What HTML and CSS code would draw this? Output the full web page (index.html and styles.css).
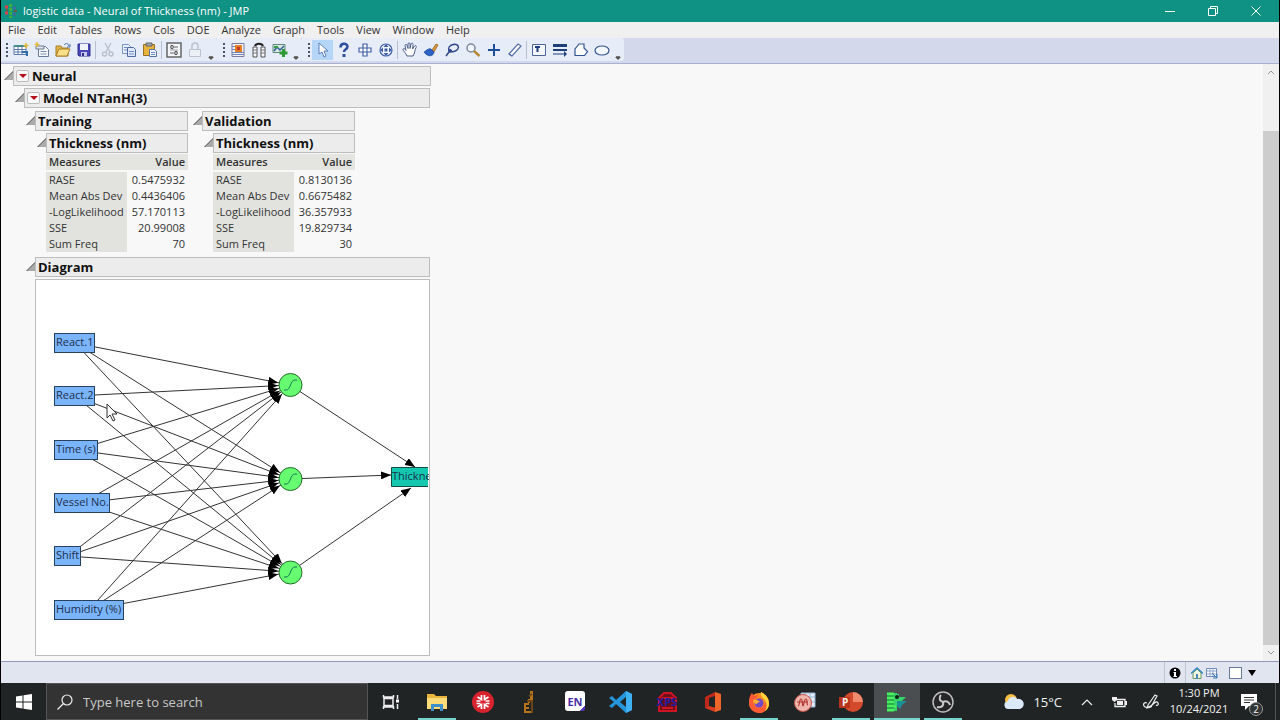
FILE: index.html
```html
<!DOCTYPE html>
<html lang="en">
<head>
  <meta charset="UTF-8" />
  <title>logistic data - Neural of Thickness (nm) - JMP</title>
  <meta name="viewport" content="width=device-width, initial-scale=1.0" />
  <link rel="stylesheet" href="styles.css">
</head>
<body>
  <div class="window">
    <header class="titlebar">
      <svg class="logo" width="14" height="14" viewBox="0 0 14 14">
        <path d="M1 3h3M1 9h3" stroke="#d8434e" stroke-width="3"/>
        <path d="M6.500 0v14" stroke="#3fae3c" stroke-width="3" stroke-dasharray="3 1"/>
        <path d="M9 4h3M9 10h3" stroke="#3d6f9c" stroke-width="3"/>
        <path d="M2 6h2M10 7h3" stroke="#6b5b3a" stroke-width="2"/>
      </svg>
      <span class="title">logistic data - Neural of Thickness (nm) - JMP</span>
      <div class="window-buttons">
        <button type="button" aria-label="Minimize"><svg width="10" height="10" viewBox="0 0 10 10"><path d="M0 5.500h10"/></svg></button>
        <button type="button" aria-label="Restore"><svg width="10" height="10" viewBox="0 0 10 10"><path d="M.5 2.500h7v7h-7zM2.500 2.500v-2h7v7h-2"/></svg></button>
        <button type="button" aria-label="Close"><svg width="10" height="10" viewBox="0 0 10 10"><path d="M.5.5l9 9M9.500.5l-9 9"/></svg></button>
      </div>
    </header>

    <nav class="menubar">
      <button type="button">File</button>
      <button type="button">Edit</button>
      <button type="button">Tables</button>
      <button type="button">Rows</button>
      <button type="button">Cols</button>
      <button type="button">DOE</button>
      <button type="button">Analyze</button>
      <button type="button">Graph</button>
      <button type="button">Tools</button>
      <button type="button">View</button>
      <button type="button">Window</button>
      <button type="button">Help</button>
    </nav>

    <div class="toolbar">
      <div class="tool-group">
        <span class="grip"></span>
        <button type="button" aria-label="New data table"><svg viewBox="0 0 16 16"><path d="M1 3.500h12v9H1z" fill="#fff" stroke="#5c7aa8"/><path d="M1 4h12" stroke="#3f8f86" stroke-width="2"/><path d="M1 7.500h12M1 10h12M5 4v8M9 4v8" stroke="#5c7aa8"/><path d="M13 1v5M10.500 3.500h5" stroke="#e2b93b" stroke-width="1.500"/><path d="M9 10h5v4" stroke="#2f6fae" stroke-width="2" fill="none"/></svg></button>
        <button type="button" aria-label="New script"><svg viewBox="0 0 16 16"><path d="M4.500 4.500h7l3 3v7h-10z" fill="#f6f8fd" stroke="#6b7a94"/><path d="M2 4h8v3H2z" fill="#dfe6f2" stroke="#6b7a94"/><path d="M6.500 9.500h6M6.500 12h6" stroke="#7d90b0"/><path d="M3 0v5M.5 2.500h5" stroke="#e2b93b" stroke-width="1.500"/></svg></button>
        <button type="button" aria-label="Open"><svg viewBox="0 0 16 16"><path d="M1 14V4h5l1 2h6v8z" fill="#e3b44a" stroke="#a87f25"/><path d="M1 14l3-7h11l-3 7z" fill="#fbe08b" stroke="#a87f25"/><path d="M9 3c2-2 4-2 5 1M15 2v3h-3" fill="none" stroke="#4a6ea8"/></svg></button>
        <button type="button" aria-label="Save"><svg viewBox="0 0 16 16"><path d="M2 2h12v12H3l-1-1z" fill="#4a48b8" stroke="#2f2d8c"/><path d="M4 2h8v6H4z" fill="#f1f3fb"/><path d="M5 10h6v4H5z" fill="#c8cbe8"/><path d="M6 11h2v3H6z" fill="#2f2d8c"/></svg></button>
        <span class="separator"></span>
        <button type="button" aria-label="Cut" disabled><svg viewBox="0 0 16 16"><path d="M5 1l5 9M11 1L6 10" stroke="#bcc2ce" stroke-width="1.500"/><circle cx="4.500" cy="12" r="2" fill="none" stroke="#bcc2ce" stroke-width="1.500"/><circle cx="11" cy="12" r="2" fill="none" stroke="#bcc2ce" stroke-width="1.500"/></svg></button>
        <button type="button" aria-label="Copy"><svg viewBox="0 0 16 16"><path d="M1.500 2.500h6l2 2v7h-8z" fill="#e8eefb" stroke="#7b93bf"/><path d="M6.500 5.500h6l2 2v7h-8z" fill="#dfe9fb" stroke="#4c6ba5"/><path d="M8 9.500h5M8 12h5M3 5.500h3M3 8h3" stroke="#6f8fc8"/></svg></button>
        <button type="button" aria-label="Paste"><svg viewBox="0 0 16 16"><path d="M1.500 2.500h11v11h-11z" fill="#e9b33f" stroke="#9a7124"/><path d="M4 1h6v3H4z" fill="#a0a5ae" stroke="#666"/><path d="M7.500 7.500h5l2 2v5h-7z" fill="#eef3fc" stroke="#5573a8"/><path d="M9 10.500h4M9 12.500h4" stroke="#6f8fc8"/></svg></button>
        <span class="separator"></span>
        <button type="button" aria-label="Preferences"><svg viewBox="0 0 16 16"><path d="M1 1h14v14H1z" fill="#f3f5f8" stroke="#666" stroke-width="1.500"/><path d="M4 5h8M4 11h8" stroke="#666"/><path d="M5 3.500h2v3H5zM9 9.500h2v3H9z" fill="#fff" stroke="#555"/><path d="M4 8h8" stroke="#999"/></svg></button>
        <button type="button" aria-label="Lock" disabled><svg viewBox="0 0 16 16"><path d="M2.500 7.500h11v7h-11z" fill="#eceff5" stroke="#bcc2ce"/><path d="M5 7V4a3 3 0 0 1 6 0v3" fill="none" stroke="#bcc2ce" stroke-width="1.500"/></svg></button>
        <button type="button" class="overflow" aria-label="More tools"></button>
      </div>
      <div class="tool-group">
        <span class="grip"></span>
        <button type="button" aria-label="Distribution"><svg viewBox="0 0 16 16"><path d="M2 1.500h12v13H2z" fill="#f5f2f6" stroke="#7c7a9e"/><path d="M5 3h7v7H5z" fill="#e67e22"/><path d="M2 4.500h3M2 7.500h3M2 10.500h12M2 12.500h12" stroke="#6f86bd"/><path d="M7 5h3v3H7z" fill="#c0392b"/></svg></button>
        <button type="button" aria-label="Fit Y by X"><svg viewBox="0 0 16 16"><path d="M2 5h4v10H2zM10 5h4v10h-4z" fill="#f5f7fa" stroke="#555"/><path d="M2 8h4M2 11h4M10 8h4M10 11h4" stroke="#777"/><path d="M4 4c1-3 7-3 8 0" fill="none" stroke="#222" stroke-width="2"/></svg></button>
        <button type="button" aria-label="Graph builder"><svg viewBox="0 0 16 16"><path d="M1 2.500h12v8H1z" fill="#d8e8e0" stroke="#5f8a7e"/><path d="M2 9l3-4 3 3 4-4" fill="none" stroke="#2f5f9c" stroke-width="1.500"/><path d="M2 4h4v2H2z" fill="#3a9d4a"/><path d="M11.500 7v8M7.500 11h8" stroke="#2e9b36" stroke-width="3"/></svg></button>
        <button type="button" class="overflow" aria-label="More analyses"></button>
      </div>
      <div class="tool-group">
        <span class="grip"></span>
        <button type="button" class="selected" aria-label="Arrow"><svg viewBox="0 0 16 16"><path d="M4 1v11l3-2 2 5 2-1-2-5h4z" fill="#fff" stroke="#5a7fb8"/></svg></button>
        <button type="button" aria-label="Help tool"><svg viewBox="0 0 16 16"><path d="M4.500 5.500c0-5 7-4.500 7-1 0 3-3.500 2.500-3.500 5.500" fill="none" stroke="#2d4f9c" stroke-width="2.500"/><path d="M6.500 12h3v3h-3z" fill="#2d4f9c"/></svg></button>
        <button type="button" aria-label="Selection"><svg viewBox="0 0 16 16"><path d="M6 2h4v4h4v4h-4v4H6v-4H2V6h4z" fill="#fff" stroke="#3f5fa5" stroke-width="1.200"/><path d="M6 6h4v4H6z" fill="none" stroke="#3f5fa5"/></svg></button>
        <button type="button" aria-label="Scroller"><svg viewBox="0 0 16 16"><circle cx="8" cy="8" r="6" fill="#f6f9ff" stroke="#3f5fa5" stroke-width="1.200"/><path d="M8 2l2.500 3h-5zM8 14l2.500-3h-5zM2 8l3-2.500v5zM14 8l-3-2.500v5zM6.500 6.500h3v3h-3z" fill="#3f5fa5"/></svg></button>
        <span class="separator"></span>
        <button type="button" aria-label="Grabber"><svg viewBox="0 0 16 16"><path d="M5 14C4 11 1 9 1 7.500s2-1 3 1L3 3.500c0-1.500 2-1.500 2 0l1 3V2c0-1.500 2-1.500 2 0v4.500L9 2c.5-1.500 2-1 2 .5L10.500 7l2-3c1-1 2.500 0 1.500 1.500-1.500 3-1 6-3 8.500z" fill="#fff" stroke="#4d5f8e"/></svg></button>
        <button type="button" aria-label="Brush"><svg viewBox="0 0 16 16"><path d="M9 8l4-6 2 1-4 7z" fill="#d9953b" stroke="#8a5b1c" stroke-width=".7"/><path d="M1 10c2-1 4-4 7-3l3 3c0 4-6 6-10 0z" fill="#2b62c4" stroke="#1e458e" stroke-width=".7"/></svg></button>
        <button type="button" aria-label="Lasso"><svg viewBox="0 0 16 16"><ellipse cx="9.500" cy="6" rx="5" ry="3.500" transform="rotate(-20 9.500 6)" fill="none" stroke="#2d4487" stroke-width="1.500"/><path d="M6 8c2 0 2 2 0 2s-1-3 1-2M5 10l-3 4" fill="none" stroke="#2d4487" stroke-width="1.500"/></svg></button>
        <button type="button" aria-label="Magnifier"><svg viewBox="0 0 16 16"><circle cx="6" cy="6" r="4" fill="#f3f8ff" stroke="#7b8799" stroke-width="1.500"/><path d="M9 9l5.500 5" stroke="#b9893a" stroke-width="2.500"/></svg></button>
        <button type="button" aria-label="Crosshairs"><svg viewBox="0 0 16 16"><path d="M8 2v12M2 8h12" stroke="#1f4e9c" stroke-width="2"/></svg></button>
        <button type="button" aria-label="Eraser"><svg viewBox="0 0 16 16"><path d="M2 12l9-10 3 2-9 10z" fill="#fff" stroke="#5870a8" stroke-width="1.200"/><path d="M5 14l-3-2" stroke="#5870a8" stroke-width="1.500"/></svg></button>
        <span class="separator"></span>
        <button type="button" aria-label="Annotate"><svg viewBox="0 0 16 16"><path d="M1.500 2.500h13v11h-13z" fill="#f3f7fd" stroke="#4d6596"/><path d="M4 5h5M6.500 5v5" stroke="#1f3f7c" stroke-width="2"/></svg></button>
        <button type="button" aria-label="Line"><svg viewBox="0 0 16 16"><path d="M1 3.500h14" stroke="#1f3f7c" stroke-width="3"/><path d="M1 8h14" stroke="#1f3f7c" stroke-width="2"/><path d="M1 12h12" stroke="#1f3f7c"/><path d="M12 9l3 3-3 3z" fill="#1f3f7c"/></svg></button>
        <button type="button" aria-label="Polygon"><svg viewBox="0 0 16 16"><path d="M2 13.500V7l4-5h5v4l3.500 3.500-3 4z" fill="#fafcff" stroke="#35538f" stroke-width="1.200"/></svg></button>
        <button type="button" aria-label="Oval"><svg viewBox="0 0 16 16"><ellipse cx="8" cy="8.500" rx="7" ry="4.500" fill="#f3f8ff" stroke="#35538f" stroke-width="1.200"/></svg></button>
        <button type="button" class="overflow" aria-label="More drawing tools"></button>
      </div>
    </div>

    <div class="workspace">
      <main class="report">
        <section class="outline">
          <div class="outline-head">
            <button type="button" class="disclosure" aria-label="Collapse Neural"></button>
            <div class="outline-title">
              <button type="button" class="red-menu" aria-label="Neural options"></button>
              <h1>Neural</h1>
            </div>
          </div>
          <div class="outline-body">
            <section class="outline model">
              <div class="outline-head">
                <button type="button" class="disclosure" aria-label="Collapse model"></button>
                <div class="outline-title">
                  <button type="button" class="red-menu" aria-label="Model options"></button>
                  <h2>Model NTanH(3)</h2>
                </div>
              </div>
              <div class="outline-body">
                <div class="fit-columns">
                  <section class="outline fit">
                    <div class="outline-head">
                      <button type="button" class="disclosure" aria-label="Collapse Training"></button>
                      <div class="outline-title"><h3>Training</h3></div>
                    </div>
                    <div class="outline-body">
                      <div class="outline-head">
                        <button type="button" class="disclosure" aria-label="Collapse Thickness"></button>
                        <div class="outline-title"><h4>Thickness (nm)</h4></div>
                      </div>
                      <table class="measures">
                        <thead>
                          <tr><th>Measures</th><th>Value</th></tr>
                        </thead>
                        <tbody>
                          <tr><td>RASE</td><td>0.5475932</td></tr>
                          <tr><td>Mean Abs Dev</td><td>0.4436406</td></tr>
                          <tr><td>-LogLikelihood</td><td>57.170113</td></tr>
                          <tr><td>SSE</td><td>20.99008</td></tr>
                          <tr><td>Sum Freq</td><td>70</td></tr>
                        </tbody>
                      </table>
                    </div>
                  </section>
                  <section class="outline fit">
                    <div class="outline-head">
                      <button type="button" class="disclosure" aria-label="Collapse Validation"></button>
                      <div class="outline-title"><h3>Validation</h3></div>
                    </div>
                    <div class="outline-body">
                      <div class="outline-head">
                        <button type="button" class="disclosure" aria-label="Collapse Thickness"></button>
                        <div class="outline-title"><h4>Thickness (nm)</h4></div>
                      </div>
                      <table class="measures">
                        <thead>
                          <tr><th>Measures</th><th>Value</th></tr>
                        </thead>
                        <tbody>
                          <tr><td>RASE</td><td>0.8130136</td></tr>
                          <tr><td>Mean Abs Dev</td><td>0.6675482</td></tr>
                          <tr><td>-LogLikelihood</td><td>36.357933</td></tr>
                          <tr><td>SSE</td><td>19.829734</td></tr>
                          <tr><td>Sum Freq</td><td>30</td></tr>
                        </tbody>
                      </table>
                    </div>
                  </section>
                </div>

                <section class="outline">
                  <div class="outline-head">
                    <button type="button" class="disclosure" aria-label="Collapse Diagram"></button>
                    <div class="outline-title"><h3>Diagram</h3></div>
                  </div>
                  <div class="diagram">
                    <svg width="393" height="375" viewBox="0 0 393 375">
                      <defs>
                        <!-- tip stops 12 units short of the end, at the edge of a hidden node -->
                        <marker id="arrow" markerUnits="userSpaceOnUse" markerWidth="10" markerHeight="8" refX="22" refY="4" orient="auto">
                          <path d="M0 0L10 4L0 8z"/>
                        </marker>
                        <marker id="arrow-end" markerUnits="userSpaceOnUse" markerWidth="10" markerHeight="8" refX="10" refY="4" orient="auto">
                          <path d="M0 0L10 4L0 8z"/>
                        </marker>
                      </defs>
                      <g class="links">
                        <path d="M39 63L254 105"/><path d="M39 63L254 199"/><path d="M39 63L254 292"/>
                        <path d="M39 116L254 105"/><path d="M39 116L254 199"/><path d="M39 116L254 292"/>
                        <path d="M40 170L254 105"/><path d="M40 170L254 199"/><path d="M40 170L254 292"/>
                        <path d="M46 223L254 105"/><path d="M46 223L254 199"/><path d="M46 223L254 292"/>
                        <path d="M32 276L254 105"/><path d="M32 276L254 199"/><path d="M32 276L254 292"/>
                        <path d="M53 330L254 105"/><path d="M53 330L254 199"/><path d="M53 330L254 292"/>
                      </g>
                      <g class="links-out">
                        <path d="M254 105L379 187"/><path d="M254 199L355 195"/><path d="M254 292L375 208"/>
                      </g>
                      <g class="inputs">
                        <rect x="18.500" y="53.500" width="40" height="19"/><text x="20" y="66">React.1</text>
                        <rect x="18.500" y="106.500" width="40" height="19"/><text x="20" y="119">React.2</text>
                        <rect x="18.500" y="160.500" width="43" height="19"/><text x="20" y="173">Time (s)</text>
                        <rect x="18.500" y="213.500" width="55" height="19"/><text x="20" y="226">Vessel No.</text>
                        <rect x="18.500" y="266.500" width="26" height="19"/><text x="20" y="279">Shift</text>
                        <rect x="18.500" y="320.500" width="69" height="19"/><text x="20" y="333">Humidity (%)</text>
                      </g>
                      <g class="hidden-nodes">
                        <circle cx="254.500" cy="105" r="11.500"/><path d="M248 110h2c5 0 4-10 9-10h2"/>
                        <circle cx="254.500" cy="199" r="11.500"/><path d="M248 204h2c5 0 4-10 9-10h2"/>
                        <circle cx="254.500" cy="292.500" r="11.500"/><path d="M248 297h2c5 0 4-10 9-10h2"/>
                      </g>
                      <g class="output">
                        <path d="M392 187.500h-36.500v19H392"/><text x="356" y="200">Thickne</text>
                      </g>
                      <path class="pointer" d="M71 124v14l3-3 3 6 2-1-3-6h5z"/>
                    </svg>
                  </div>
                </section>
              </div>
            </section>
          </div>
        </section>
      </main>
      <div class="scrollbar">
        <button type="button" aria-label="Scroll up"><svg width="8" height="6" viewBox="0 0 8 6"><path d="M1 5l3-3 3 3"/></svg></button>
        <div class="track"><div class="thumb"></div></div>
        <button type="button" aria-label="Scroll down"><svg width="8" height="6" viewBox="0 0 8 6"><path d="M1 1l3 3 3-3"/></svg></button>
      </div>
    </div>

    <footer class="statusbar">
      <button type="button" aria-label="Information"><svg width="12" height="12" viewBox="0 0 12 12"><circle cx="6" cy="6" r="5.500"/><path d="M5 2h2v2H5zM4.500 5H7v4h1v1H4.500V9H5V6h-.5z" fill="#fff"/></svg></button>
      <button type="button" class="home" aria-label="Home window"><svg width="12" height="12" viewBox="0 0 12 12"><path d="M2 6v5.500h8V6L6 2z" fill="#f0f5df" stroke="#6a9a62"/><path d="M0 6.500L6 1l6 5.500" fill="none" stroke="#3688c8" stroke-width="1.500"/><path d="M5 7h2v5H5z" fill="#4a88b8"/></svg></button>
      <button type="button" aria-label="Data table"><svg width="12" height="12" viewBox="0 0 12 12"><path d="M.5 1.500h10v8H.5z" fill="#fff" stroke="#6d87b5"/><path d="M1 4h9M1 7h9M4 1v8M7 1v8" stroke="#8fa5cb"/><path d="M6 6l5 5M11 7v4H7" stroke="#3678b8" fill="none"/></svg></button>
      <input type="checkbox" aria-label="Mark window">
      <button type="button" class="drop" aria-label="Window list"></button>
    </footer>
  </div>

  <div class="taskbar">
    <button type="button" class="start" aria-label="Start"><svg width="16" height="16" viewBox="0 0 16 16"><path d="M0 2.500L6.500 1.500v6H0zM7.500 1.300L16 0v7.500H7.500zM0 8.500h6.500v6L0 13.500zM7.500 8.500H16V16l-8.500-1.300z" fill="#fff"/></svg></button>
    <label class="search">
      <svg width="16" height="16" viewBox="0 0 16 16"><circle cx="10" cy="6" r="5"/><path d="M6.500 9.500L.5 15.500"/></svg>
      <input type="text" placeholder="Type here to search" aria-label="Search">
    </label>
    <div class="apps">
      <button type="button" aria-label="Task view"><svg width="18" height="16" viewBox="0 0 18 16"><path d="M2 4.500h9v7H2zM1.500 1v2h10V1M1.500 15v-2h10v2M15.500 1v4M15.500 10v5" fill="none" stroke="#eee" stroke-width="1.500"/><path d="M14 5.500h3v3h-3z" fill="#fff"/></svg></button>
      <button type="button" class="running" aria-label="File Explorer"><svg width="20" height="18" viewBox="0 0 20 18"><path d="M0 1h7l2 2h11v13H0z" fill="#e9b53c"/><path d="M0 5h20v11H0z" fill="#fbdc78"/><path d="M4 18v-7h12v7h-3v-4H7v4z" fill="#3f8fc8"/></svg></button>
      <button type="button" aria-label="Mendeley"><svg width="22" height="22" viewBox="0 0 22 22"><circle cx="11" cy="11" r="11" fill="#d8232f"/><path d="M9.500 4v4.500L5.500 6M12.500 4v4.500l4-2.500M4.500 10h4M17.500 10h-4M9.500 18v-4.500L5.500 16M12.500 18v-4.500l4 2.500M4.500 12.500h4M17.500 12.500h-4" fill="none" stroke="#fff" stroke-width="1.700"/></svg></button>
      <button type="button" aria-label="Figure tool"><svg width="12" height="22" viewBox="0 0 12 22"><path d="M7 0h3v9H7zM5 8h2v4H5zM1 12h5v2H3v2h3v2H3v2h7v2H1z" fill="#b8741c"/><path d="M9 11v11M6 5l3-2M4 10h6" stroke="#6b4516" stroke-width="2"/></svg></button>
      <button type="button" class="endnote" aria-label="EndNote">EN</button>
      <button type="button" aria-label="Visual Studio Code"><svg width="24" height="22" viewBox="0 0 24 22"><path d="M17 0l6 3v16l-6 3L7 13l-4 4-3-2 5-4-5-4 3-2 4 4zM17 6l-6 5 6 5z" fill="#2496dc" fill-rule="evenodd"/><path d="M17 0l6 3v16l-6 3z" fill="#3fb0f2"/></svg></button>
      <button type="button" class="xps" aria-label="XPS"><svg width="20" height="20" viewBox="0 0 20 20"><path d="M2 6l5-5h7l5 5v13H2z" fill="#6b0f18" stroke="#d01424" stroke-width="2"/><path d="M5 6h11M5 16h11" stroke="#d01424" stroke-width="2"/></svg><span>XPS</span></button>
      <button type="button" aria-label="Office"><svg width="18" height="20" viewBox="0 0 18 20"><path d="M1 5l10-5v4L5 6v8l-4 2z" fill="#c0281c"/><path d="M1 16l4-2 6 1.500V20z" fill="#d83b1e"/><path d="M11 0l6 2v16l-6 2z" fill="#f0652a"/></svg></button>
      <button type="button" class="running" aria-label="Firefox"><svg width="22" height="22" viewBox="0 0 22 22"><circle cx="11" cy="12" r="10" fill="#ff8a1e"/><path d="M1 11C1 6 3 3 4 2l2 3 4-1-2 4-3 2c0 8 10 9 12 2 1-5-4-5-4-11 5 2 8 7 8 11a10 10 0 0 1-20 0z" fill="#ff5a36"/><path d="M13 1c5 3 8 6 8 12 0 3-2 6-4 7 3-6 1-9-1-12-2-2-4-3-3-7z" fill="#ffd43b"/><circle cx="11" cy="12" r="4.500" fill="#7548c8"/><path d="M5 9c3-1 5 0 7 2-2 0-3 1-3 2-2 0-4-2-4-4z" fill="#ffb02e"/></svg></button>
      <button type="button" aria-label="JMP data"><svg width="22" height="20" viewBox="0 0 22 20"><path d="M7 1h14v14H7z" fill="#e4ecf8" stroke="#9fb5d3"/><path d="M11 1v14M16 1v14M7 5h14M7 10h14" stroke="#9fb5d3"/><circle cx="9" cy="11" r="8.500" fill="#f0b5ad" stroke="#c65249"/><path d="M4 14c2 0 1-7 3-7s1 7 2 7 1-7 3-7 0 6 2 6M3 10h11" fill="none" stroke="#b3392f" stroke-width="1.200"/></svg></button>
      <button type="button" class="running powerpoint" aria-label="PowerPoint"><svg width="24" height="20" viewBox="0 0 24 20"><circle cx="14" cy="10" r="10" fill="#d2492c"/><path d="M14 0a10 10 0 0 1 10 10H14z" fill="#f08a6c"/><path d="M0 5h11v11H0z" fill="#b8341c"/></svg><span>P</span></button>
      <button type="button" class="running active" aria-label="JMP"><svg width="22" height="20" viewBox="0 0 22 20"><path d="M1 1h10v18H1z" fill="#35d268"/><path d="M1 2h7M1 6h9M1 10h8M1 14h9M1 18h7" stroke="#4af05e" stroke-width="3"/><path d="M1 4h7M1 8h7M1 12h7M1 16h7" stroke="#1f7a3a"/><path d="M8 2h5v3h7l-4 4h-4l-3 5H8z" fill="#35d268"/><path d="M11 9h10l-5 4-2 4-3-3z" fill="#1d9096"/><circle cx="11" cy="5" r="2" fill="#101c14"/></svg></button>
      <button type="button" class="running" aria-label="OBS Studio"><svg width="22" height="22" viewBox="0 0 22 22"><circle cx="11" cy="11" r="10" fill="#262628" stroke="#bdbdbf" stroke-width="1.500"/><path d="M11 11c-4-1-4-5-2-7M11 11c3-2 6 0 7 3M11 11c1 4-2 6-6 5" fill="none" stroke="#c9c9cb" stroke-width="2"/></svg></button>
    </div>
    <div class="tray">
      <button type="button" class="weather"><svg width="20" height="16" viewBox="0 0 20 16"><circle cx="7" cy="6" r="6" fill="#f8bf42"/><path d="M5 15a4 4 0 0 1-1-8 5 5 0 0 1 9-2 5 5 0 0 1 3 10z" fill="#dbe9f8"/></svg>15°C</button>
      <button type="button" class="tray-icon" aria-label="Show hidden icons"><svg width="12" height="8" viewBox="0 0 12 8"><path d="M1 7l5-5 5 5" fill="none" stroke="#eee" stroke-width="1.200"/></svg></button>
      <button type="button" class="tray-icon" aria-label="Battery"><svg width="16" height="12" viewBox="0 0 16 12"><path d="M3 3.500h11v7H4V7" fill="none" stroke="#eee" stroke-width="1.300"/><path d="M6 5h6v4H6zM14 5h2v4h-2zM1 1h5v3L3.500 6 1 4z" fill="#eee"/></svg></button>
      <button type="button" class="tray-icon" aria-label="Pen"><svg width="16" height="16" viewBox="0 0 16 16"><path d="M5 11L12 1l2 1-6 11-4 1zM4 9c-3-1-4 1-3 3s5 2 8-1 5-4 6-2-1 3-2 2" fill="none" stroke="#eee" stroke-width="1.200"/></svg></button>
      <button type="button" class="clock"><span>1:30 PM</span><span>10/24/2021</span></button>
      <button type="button" class="notifications" aria-label="Notifications"><svg width="16" height="16" viewBox="0 0 16 16"><path d="M0 0h16v12H8l-4 4v-4H0z" fill="#fff"/><path d="M3 3.500h10M3 6h10M3 8.500h6" stroke="#333"/></svg><span class="badge">2</span></button>
    </div>
  </div>
</body>
</html>
```
FILE: styles.css
```css
* {
  box-sizing: border-box;
}

body {
  margin: 0;
  height: 100vh;
  display: flex;
  flex-direction: column;
  overflow: hidden;
  background: #000;
  font-family: 'Open Sans', 'Noto Sans', sans-serif;
  font-size: 11px;
  color: #333;
}

button {
  padding: 0;
  border: none;
  background: none;
  font: inherit;
  color: inherit;
}

svg {
  display: block;
}

.window {
  flex: 1;
  min-height: 0;
  display: flex;
  flex-direction: column;
  margin: 0 1px;
  background: #f8f8f8;
}

/* Title bar */
.titlebar {
  display: flex;
  align-items: center;
  height: 22px;
  padding-left: 3px;
  background: #0f9184;
  color: #fff;
}

.title {
  margin-left: 5px;
  line-height: 20px;
}

.window-buttons {
  display: flex;
  margin-left: auto;
  margin-right: 2px;
}

.window-buttons button {
  display: flex;
  align-items: center;
  justify-content: center;
  width: 43px;
  height: 18px;
}

.window-buttons svg {
  fill: none;
  stroke: #fff;
}

/* Menu */
.menubar {
  display: flex;
  align-items: center;
  gap: 12px;
  height: 16px;
  padding-left: 7px;
  background: #f0f0f0;
}

.menubar button {
  line-height: 16px;
}

/* Toolbar */
.toolbar {
  display: flex;
  height: 26px;
  padding-bottom: 2px;
  background: #d3d9eb;
  border-bottom: 1px solid #a9b1d3;
}

.tool-group {
  display: flex;
  align-items: center;
  padding-left: 5px;
  background: #e6ecf8;
  border-radius: 0 3px 3px 0;
}

.tool-group + .tool-group {
  padding-left: 6px;
}

.grip {
  width: 2px;
  height: 14px;
  margin-right: 2px;
  background: repeating-linear-gradient(#4b5265 0 2px, transparent 2px 4px);
}

.tool-group button {
  display: flex;
  align-items: center;
  justify-content: center;
  width: 21px;
  height: 20px;
}

.tool-group button.selected {
  background: #b5d6f7;
}

.tool-group svg {
  width: 16px;
  height: 16px;
  fill: none;
}

.separator {
  width: 1px;
  height: 18px;
  margin: 0 1px;
  background: #b9bfce;
}

.tool-group button.overflow {
  width: 12px;
  align-items: flex-end;
}

.overflow::after {
  content: '';
  border: 3px solid transparent;
  border-top-color: #555;
  border-bottom: none;
  box-shadow: 0 -2px 0 -1px #777;
}

/* Report */
.workspace {
  flex: 1;
  min-height: 0;
  display: flex;
}

.report {
  flex: 1;
  padding: 2px 3px;
  overflow: hidden;
}

.outline {
  width: max-content;
}

.outline-head {
  display: flex;
  align-items: flex-end;
}

.outline-body {
  padding: 2px 0 0 11px;
}

.outline-title {
  flex: 1;
  display: flex;
  align-items: center;
  gap: 3px;
  height: 20px;
  padding-left: 2px;
  background: #ececec;
  border: 1px solid #bdbdbd;
}

.outline-title h1,
.outline-title h2,
.outline-title h3,
.outline-title h4 {
  margin: 0;
  font-size: 13px;
  font-weight: 700;
  line-height: 18px;
  color: #111;
}

.disclosure {
  width: 9px;
  height: 9px;
  margin-bottom: 6px;
  background: linear-gradient(135deg, #444 50%, #aaa 60%);
  clip-path: polygon(100% 0, 100% 100%, 0 100%);
}

.red-menu {
  display: flex;
  align-items: center;
  justify-content: center;
  width: 13px;
  height: 12px;
  background: #f8f8f8;
  border: 1px solid #bbb;
  border-radius: 2px;
}

.red-menu::after {
  content: '';
  border: 4px solid transparent;
  border-top-color: #b3101c;
  border-bottom: none;
}

.model {
  padding-right: 1px;
}

.fit-columns {
  display: flex;
  gap: 5px;
  padding-top: 1px;
  margin-bottom: 5px;
}

.measures {
  width: 142px;
  margin: 1px 0 0 9px;
  border-collapse: collapse;
}

.measures th,
.measures td {
  height: 16px;
  padding: 0 3px;
  line-height: 16px;
  text-align: left;
  white-space: nowrap;
}

.measures th {
  background: #e4e5e1;
  font-weight: 600;
}

.measures td:first-child {
  width: 80px;
  background: #e2e3de;
}

.measures th:last-child,
.measures td:last-child {
  text-align: right;
}

.measures thead::after {
  content: '';
  display: block;
  height: 2px;
}

/* Network diagram */
.diagram {
  margin: 2px 0 0 9px;
  background: #fff;
  border: 1px solid #bdbdbd;
}

.diagram text {
  font-size: 11px;
  fill: #1c2f4c;
}

.links path,
.links-out path {
  stroke: #333;
}

.links path {
  marker-end: url(#arrow);
}

.links-out path {
  marker-end: url(#arrow-end);
}

.inputs rect {
  fill: #7ab4fb;
  stroke: #26425f;
}

.hidden-nodes circle {
  fill: #66fb70;
  stroke: #246b2b;
}

.hidden-nodes path {
  fill: none;
  stroke: #157a52;
}

.output path {
  fill: #14c8b0;
  stroke: #124c45;
}

.pointer {
  fill: #fff;
  stroke: #333;
}

/* Scrollbar */
.scrollbar {
  display: flex;
  flex-direction: column;
  width: 16px;
  background: #f0f0f0;
}

.scrollbar button {
  display: flex;
  align-items: center;
  justify-content: center;
  height: 16px;
}

.scrollbar svg {
  fill: none;
  stroke: #999;
}

.track {
  flex: 1;
  display: flex;
  flex-direction: column;
  justify-content: flex-end;
}

.thumb {
  height: 91%;
  background: #cdcdcd;
}

/* Status bar */
.statusbar {
  display: flex;
  align-items: center;
  justify-content: flex-end;
  height: 22px;
  padding-right: 23px;
  background: #e1e5f0;
  border-top: 1px solid #8f9bb8;
}

.statusbar button:first-child {
  padding: 5px 4px;
  border: 1px solid #c0c5d3;
  border-width: 0 1px;
}

.statusbar .home {
  margin: 0 3px 0 5px;
}

.statusbar input {
  appearance: none;
  width: 13px;
  height: 12px;
  margin: 0 6px 0 11px;
  background: #fff;
  border: 1px solid #6a7a98;
}

.drop {
  border: 4px solid transparent;
  border-top: 6px solid #000;
  border-bottom: none;
}

/* Taskbar */
.taskbar {
  display: flex;
  height: 37px;
  margin-left: 1px;
  background: #212425;
  color: #f2f2f2;
}

.taskbar button {
  display: flex;
  align-items: center;
  justify-content: center;
}

.start {
  width: 45px;
}

.search {
  display: flex;
  align-items: center;
  flex: 0 1 322px;
  min-width: 40px;
  padding-left: 10px;
  background: #333;
  border: 1px solid #555;
}

.search svg {
  fill: none;
  stroke: #eee;
  stroke-width: 1.2;
}

.search input {
  flex: 1;
  min-width: 0;
  padding: 0;
  margin-left: 10px;
  border: none;
  background: none;
  color: #fff;
  font-family: inherit;
  font-size: 13px;
}

.search input::placeholder {
  color: #c8c8c8;
}

.apps {
  display: flex;
}

.apps button {
  width: 46px;
}

/* underline of an open app */
.running {
  background: linear-gradient(#76d5cf, #76d5cf) bottom / 38px 2px no-repeat;
}

.apps .active {
  background-color: #4b4e50;
  background-size: 100% 2px;
}

.apps .endnote {
  width: 20px;
  height: 20px;
  margin: 8px 13px;
  background: linear-gradient(135deg, #fff 86%, #5a3cc0 86%);
  border-radius: 3px;
  color: #4a2fa8;
  font-weight: 700;
}

.xps,
.powerpoint {
  position: relative;
}

.xps span {
  position: absolute;
  color: #1a1fa8;
  font-size: 11px;
  font-weight: 700;
}

.powerpoint span {
  position: absolute;
  left: 14px;
  font-size: 10px;
  font-weight: 700;
}

.tray {
  display: flex;
  margin-left: auto;
  padding-right: 8px;
  border-right: 1px solid #555;
  margin-right: 4px;
}

.weather {
  gap: 9px;
  margin-right: 9px;
  font-size: 13px;
}

.tray .tray-icon {
  width: 32px;
}

.tray .clock {
  flex-direction: column;
  width: 64px;
  padding-bottom: 2px;
  line-height: 16px;
}

.tray .notifications {
  position: relative;
  width: 36px;
}

.badge {
  position: absolute;
  right: 4px;
  bottom: 4px;
  width: 14px;
  height: 14px;
  background: #303334;
  border: 1px solid #999;
  border-radius: 50%;
  font-size: 10px;
  line-height: 12px;
}
```
